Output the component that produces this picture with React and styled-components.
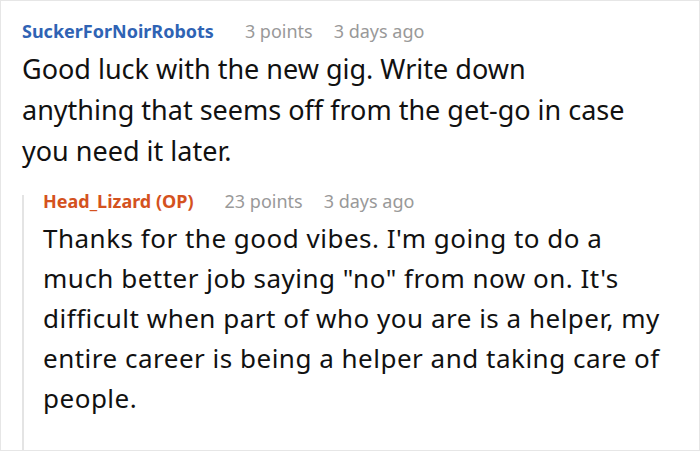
import React from "react";
import styled, { createGlobalStyle } from "styled-components";

const GlobalStyle = createGlobalStyle`
  html, body {
    margin: 0;
    padding: 0;
    background: #fff;
  }
  body {
    font-family: "Noto Sans", "Open Sans", sans-serif;
  }
`;

const Frame = styled.div`
  box-sizing: border-box;
  width: 700px;
  height: 451px;
  border: 1px solid #e6e6e6;
  overflow: hidden;
  padding: 17px 0 0 21px;
`;

const Comment = styled.div`
  display: flex;
  flex-direction: column;
`;

const Meta = styled.div`
  display: flex;
  align-items: baseline;
  font-size: 18px;
  line-height: 26px;
`;

const Author = styled.span`
  font-weight: 700;
  color: ${({ op }) => (op ? "#d4521e" : "#2f63b4")};
  margin-right: 31px;
`;

const Info = styled.span`
  color: #999;
  & + & {
    margin-left: 21px;
  }
`;

const Body = styled.p`
  margin: 4px 0 0;
  font-size: 27px;
  line-height: 41px;
  color: #111;
  white-space: nowrap;
`;

const Replies = styled.div`
  position: relative;
  margin-top: 9px;
  padding: 8px 0 0 21px;
  height: 300px;

  &::before {
    content: "";
    position: absolute;
    left: 0;
    top: 15px;
    bottom: 0;
    width: 2px;
    background: #e4e4e4;
  }
`;

const ReplyBody = styled(Body)`
  font-size: 26px;
  line-height: 40px;
  letter-spacing: 0.5px;
`;

function Header({ author, points, when, op }) {
  return (
    <Meta>
      <Author op={op}>{author}</Author>
      <Info>{points} points</Info>
      <Info>{when}</Info>
    </Meta>
  );
}

export default function App() {
  return (
    <>
      <GlobalStyle />
      <Frame>
        <Comment>
          <Header author="SuckerForNoirRobots" points={3} when="3 days ago" />
          <Body>
            Good luck with the new gig. Write down
            <br />
            anything that seems off from the get-go in case
            <br />
            you need it later.
          </Body>
          <Replies>
            <Comment>
              <Header
                author="Head_Lizard (OP)"
                points={23}
                when="3 days ago"
                op
              />
              <ReplyBody>
                Thanks for the good vibes. I'm going to do a
                <br />
                much better job saying "no" from now on. It's
                <br />
                difficult when part of who you are is a helper, my
                <br />
                entire career is being a helper and taking care of
                <br />
                people.
              </ReplyBody>
            </Comment>
          </Replies>
        </Comment>
      </Frame>
    </>
  );
}
